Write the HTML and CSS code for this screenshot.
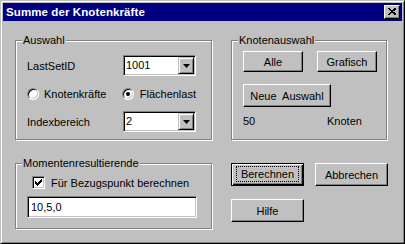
FILE: index.html
```html
<!DOCTYPE html>
<html lang="de">
<head>
  <meta charset="UTF-8" />
  <title>Summe der Knotenkräfte</title>
  <link rel="stylesheet" href="styles.css">
</head>
<body>

  <div class="window">
    <div class="titlebar">
      <span class="title">Summe der Knotenkräfte</span>
      <span class="close-btn">
        <svg width="8" height="7" viewBox="0 0 8 7">
          <path d="M0.5 0.5 L7 6.5 M1.5 0.5 L8 6.5 M7 0.5 L0.5 6.5 M8 0.5 L1.5 6.5" stroke="#000" stroke-width="1" fill="none"/>
        </svg>
      </span>
    </div>

    <div class="dialog">
      <!-- Auswahl -->
      <div class="group group-auswahl">
        <span class="group-label">Auswahl</span>
        <div class="auswahl-grid">
          <span class="label">LastSetID</span>
          <div class="combo">
            <span class="combo-value">1001</span>
            <span class="combo-btn"><svg width="7" height="4" viewBox="0 0 7 4"><polygon points="0,0 7,0 3.5,4" fill="#000"/></svg></span>
          </div>

          <span class="option"><span class="radio"></span>Knotenkräfte</span>
          <span class="option option-right"><span class="radio checked"></span>Flächenlast</span>

          <span class="label">Indexbereich</span>
          <div class="combo">
            <span class="combo-value">2</span>
            <span class="combo-btn"><svg width="7" height="4" viewBox="0 0 7 4"><polygon points="0,0 7,0 3.5,4" fill="#000"/></svg></span>
          </div>
        </div>
      </div>

      <!-- Knotenauswahl -->
      <div class="group group-knoten">
        <span class="group-label">Knotenauswahl</span>
        <div class="btn-row">
          <button class="btn btn-small">Alle</button>
          <button class="btn btn-small">Grafisch</button>
        </div>
        <button class="btn btn-neu">Neue&nbsp; Auswahl</button>
        <div class="count-row">
          <span class="count">50</span>
          <span>Knoten</span>
        </div>
      </div>

      <!-- Momentenresultierende -->
      <div class="group group-moment">
        <span class="group-label">Momentenresultierende</span>
        <div class="check-row">
          <span class="checkbox">
            <svg width="7" height="7" viewBox="0 0 7 7">
              <path d="M0 2 H1 V3 H2 V4 H3 V3 H4 V2 H5 V1 H6 V0 H7 V3 H6 V4 H5 V5 H4 V6 H3 V7 H2 V6 H1 V5 H0 Z" fill="#000"/>
            </svg>
          </span>
          Für Bezugspunkt berechnen
        </div>
        <div class="edit">10,5,0</div>
      </div>

      <!-- Aktionen -->
      <div class="actions">
        <button class="btn btn-default"><span class="focus">Berechnen</span></button>
        <button class="btn">Abbrechen</button>
        <button class="btn">Hilfe</button>
      </div>
    </div>
  </div>

</body>
</html>
```

FILE: styles.css
```css
body {
  margin: 0;
  background-color: #c0c0c0;
  font-family: 'Liberation Sans', Arial, sans-serif;
  font-size: 11px;
  color: #000;
}

.window {
  width: 405px;
  height: 244px;
  box-sizing: border-box;
  border: 1px solid;
  border-color: #c0c0c0 #000 #000 #c0c0c0;
  box-shadow: inset 1px 1px #fff, inset -1px -1px #808080;
  padding: 2px;
  background-color: #c0c0c0;
}

.titlebar {
  height: 18px;
  background-color: #000080;
  color: white;
  display: flex;
  align-items: center;
  justify-content: space-between;
  padding: 0 2px 0 3px;
}

.title {
  font-weight: bold;
  font-size: 11.5px;
  letter-spacing: 0.1px;
}

.close-btn {
  width: 16px;
  height: 14px;
  box-sizing: border-box;
  background-color: #c0c0c0;
  border: 1px solid;
  border-color: #fff #000 #000 #fff;
  box-shadow: inset -1px -1px #808080;
  display: flex;
  align-items: center;
  justify-content: center;
  padding: 0 1px 1px 0;
}

.close-btn svg {
  display: block;
  shape-rendering: crispEdges;
}

.dialog {
  display: grid;
  grid-template-columns: 197px 156px;
  grid-template-rows: 100px 66px;
  column-gap: 19px;
  row-gap: 23px;
  padding: 19px 0 0 12px;
}

/* Gruppenrahmen */
.group {
  position: relative;
  box-sizing: border-box;
  border: 1px solid #808080;
  box-shadow: inset 1px 1px #fff, 1px 1px #fff;
}

.group-label {
  position: absolute;
  top: -7px;
  left: 6px;
  padding: 0 1px;
  background-color: #c0c0c0;
  line-height: 13px;
}

.auswahl-grid {
  display: grid;
  grid-template-columns: 96px 73px;
  grid-template-rows: 21px 35px 21px;
  align-items: center;
  padding: 14px 0 0 11px;
}

.option {
  display: flex;
  align-items: center;
  gap: 5px;
}

.option-right {
  margin-left: -1px;
  gap: 6px;
}

.radio {
  position: relative;
  width: 12px;
  height: 12px;
  box-sizing: border-box;
  border-radius: 50%;
  border: 1px solid;
  border-color: #808080 #fff #fff #808080;
  box-shadow: inset 1px 1px #000, inset -1px -1px #c0c0c0;
  background-color: #fff;
}

.radio.checked::after {
  content: "";
  position: absolute;
  left: 3px;
  top: 3px;
  width: 4px;
  height: 4px;
  border-radius: 50%;
  background-color: #000;
}

/* Eingabefelder */
.combo, .edit {
  box-sizing: border-box;
  border: 1px solid;
  border-color: #808080 #fff #fff #808080;
  box-shadow: inset 1px 1px #000, inset -1px -1px #c0c0c0;
  background-color: #fff;
  padding: 1px;
}

.combo {
  display: flex;
  height: 21px;
}

.combo-value {
  flex: 1;
  padding-left: 1px;
  line-height: 17px;
}

.combo-btn {
  width: 16px;
  height: 17px;
  box-sizing: border-box;
  background-color: #c0c0c0;
  border: 1px solid;
  border-color: #c0c0c0 #000 #000 #c0c0c0;
  box-shadow: inset 1px 1px #fff, inset -1px -1px #808080;
  display: flex;
  align-items: center;
  justify-content: center;
}

.combo-btn svg {
  display: block;
}

/* Knöpfe */
.btn {
  box-sizing: border-box;
  height: 23px;
  width: 73px;
  padding: 0;
  background-color: #c0c0c0;
  border: 1px solid;
  border-color: #fff #000 #000 #fff;
  box-shadow: inset -1px -1px #808080;
  font-family: 'Liberation Sans', Arial, sans-serif;
  font-size: 11px;
  color: #000;
}

.group-knoten {
  padding: 10px 0 0 11px;
}

.btn-row {
  display: flex;
  gap: 14px;
}

.btn-small {
  width: 60px;
  height: 21px;
}

.btn-neu {
  display: block;
  width: 88px;
  margin-top: 12px;
}

.count-row {
  display: flex;
  margin-top: 8px;
  line-height: 13px;
}

.count {
  width: 84px;
}

.group-moment {
  padding: 12px 0 0 11px;
}

.check-row {
  display: flex;
  align-items: center;
  gap: 6px;
  padding-left: 5px;
  height: 13px;
}

.checkbox {
  width: 13px;
  height: 13px;
  box-sizing: border-box;
  border: 1px solid;
  border-color: #808080 #fff #fff #808080;
  box-shadow: inset 1px 1px #000, inset -1px -1px #c0c0c0;
  background-color: #fff;
  display: flex;
  align-items: center;
  justify-content: center;
}

.checkbox svg {
  display: block;
}

.edit {
  width: 170px;
  height: 22px;
  margin-top: 7px;
  padding-left: 3px;
  line-height: 18px;
}

.actions {
  display: grid;
  grid-template-columns: 73px 73px;
  grid-auto-rows: 23px;
  column-gap: 11px;
  row-gap: 13px;
  align-content: start;
}

.btn-default {
  border-color: #000;
  box-shadow: inset 1px 1px #fff, inset -1px -1px #000, inset -2px -2px #808080;
  padding: 2px 4px 3px 4px;
}

.btn-default .focus {
  display: block;
  height: 100%;
  box-sizing: border-box;
  border: 1px dotted #000;
  line-height: 14px;
}
```
